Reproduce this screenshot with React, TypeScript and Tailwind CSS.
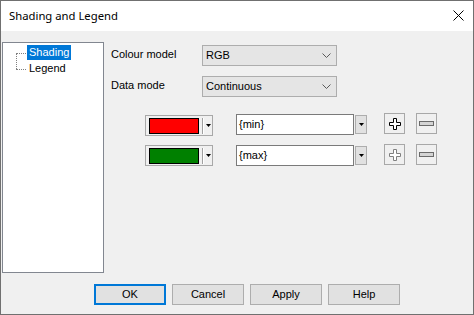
import React from "react";

const body = { fontFamily: '"Liberation Sans", Arial, sans-serif' };

function Chevron() {
  return (
    <svg width="9" height="5" viewBox="0 0 9 5" className="block">
      <path d="M0.5 0.5 L4.5 4.5 L8.5 0.5" fill="none" stroke="#5a5a5a" strokeWidth="1" />
    </svg>
  );
}

function Combo({ text }: { text: string }) {
  return (
    <div className="flex h-[21px] w-[135px] items-center justify-between border border-[#adadad] bg-[#e5e5e5] pl-[3px] pr-[5px] text-[11px] text-black">
      <span>{text}</span>
      <Chevron />
    </div>
  );
}

function Tri() {
  return (
    <svg width="5" height="3" viewBox="0 0 5 3" className="block">
      <path d="M0 0 H5 L2.5 3 Z" fill="#000" />
    </svg>
  );
}

function Picker({ color }: { color: string }) {
  return (
    <div className="flex h-[21px] w-[68px] items-center border border-[#a8a8a8] bg-[#f0f0f0] pl-[3px]">
      <div className="h-[16px] w-[50px] border border-black" style={{ background: color }} />
      <div className="ml-[3px] h-[16px] w-[2px] border-l border-[#a0a0a0] bg-white" />
      <div className="ml-[2px]">
        <Tri />
      </div>
    </div>
  );
}

function Field({ text }: { text: string }) {
  return (
    <div className="flex items-start">
      <div className="flex h-[21px] w-[118px] items-center border border-[#7a7a7a] bg-white pl-[2px] text-[11px] text-black">
        {text}
      </div>
      <div className="ml-[1px] mt-[1px] flex h-[19px] w-[12px] items-center justify-center border border-[#adadad] bg-[#e1e1e1]">
        <Tri />
      </div>
    </div>
  );
}

function Plus({ enabled }: { enabled: boolean }) {
  const c = enabled ? "#000" : "#808080";
  return (
    <div className="flex h-[21px] w-[21px] items-center justify-center border border-[#a8a8a8] bg-[#f0f0f0]">
      <svg width="14" height="14" viewBox="0 0 14 14" className="block">
        <path
          d="M5.5 1.5 H8.5 V5.5 H12.5 V8.5 H8.5 V12.5 H5.5 V8.5 H1.5 V5.5 H5.5 Z"
          fill="#fff"
          stroke={c}
          strokeWidth="1"
        />
      </svg>
    </div>
  );
}

function Minus() {
  return (
    <div className="flex h-[21px] w-[21px] items-center justify-center border border-[#a8a8a8] bg-[#f0f0f0]">
      <svg width="15" height="6" viewBox="0 0 15 6" className="block">
        <rect x="0.5" y="0.5" width="14" height="4" fill="#d4d4d4" stroke="#6a6a6a" strokeWidth="1" />
      </svg>
    </div>
  );
}

function Btn({ label, def }: { label: string; def?: boolean }) {
  return (
    <div
      className={
        "flex h-[21px] w-[72px] items-center justify-center bg-[#e1e1e1] text-[11px] text-black " +
        (def ? "border-2 border-[#0078d7]" : "border border-[#adadad]")
      }
    >
      {label}
    </div>
  );
}

export default function App() {
  return (
    <div className="flex h-[315px] w-[474px] flex-col border border-[#707070] bg-[#f0f0f0]" style={body}>
      {/* title bar */}
      <div className="flex h-[30px] shrink-0 items-center justify-between bg-white pl-[8px] pr-[9px]">
        <span
          className="text-[11.3px] text-black"
          style={{ fontFamily: '"Segoe UI", "Noto Sans", sans-serif' }}
        >
          Shading and Legend
        </span>
        <svg width="11" height="11" viewBox="0 0 11 11" className="mb-[1px] block">
          <path d="M0.5 0.5 L10.5 10.5 M10.5 0.5 L0.5 10.5" stroke="#000" strokeWidth="1" />
        </svg>
      </div>

      {/* main */}
      <div className="flex flex-1 flex-col">
        <div className="flex">
          {/* tree */}
          <div className="ml-[1px] mt-[11px] h-[231px] w-[102px] border border-[#828790] bg-white text-[11px]">
            <div className="relative h-full">
              <div className="absolute left-[13px] top-[10px] h-[16px] border-l border-dotted border-[#808080]" />
              <div className="absolute left-[13px] top-[10px] w-[10px] border-t border-dotted border-[#808080]" />
              <div className="absolute left-[13px] top-[26px] w-[10px] border-t border-dotted border-[#808080]" />
              <div className="flex flex-col pl-[24px] pt-[2px]">
                <div className="flex h-[15px] w-fit items-center bg-[#0078d7] px-[2px] text-white">Shading</div>
                <div className="mt-[1px] flex h-[15px] w-fit items-center px-[2px] text-black">Legend</div>
              </div>
            </div>
          </div>

          {/* right pane */}
          <div className="ml-[7px] flex flex-col pt-[14px] text-[11px] text-black">
            <div className="flex h-[21px] items-start">
              <span className="w-[91px] pt-[1px]">Colour model</span>
              <Combo text="RGB" />
            </div>
            <div className="mt-[10px] flex h-[21px] items-start">
              <span className="w-[91px] pt-[1px]">Data mode</span>
              <Combo text="Continuous" />
            </div>

            <div className="mt-[16px] flex items-start">
              <div className="ml-[34px] mt-[2px]">
                <Picker color="#ff0000" />
              </div>
              <div className="ml-[23px] mt-[1px]">
                <Field text="{min}" />
              </div>
              <div className="ml-[17px]">
                <Plus enabled />
              </div>
              <div className="ml-[11px]">
                <Minus />
              </div>
            </div>
            <div className="mt-[8px] flex items-start">
              <div className="ml-[34px] mt-[1px]">
                <Picker color="#008000" />
              </div>
              <div className="ml-[23px] mt-[1px]">
                <Field text="{max}" />
              </div>
              <div className="ml-[17px]">
                <Plus enabled={false} />
              </div>
              <div className="ml-[11px]">
                <Minus />
              </div>
            </div>
          </div>
        </div>

        {/* buttons */}
        <div className="ml-[93px] mt-[11px] flex gap-[6px]">
          <Btn label="OK" def />
          <Btn label="Cancel" />
          <Btn label="Apply" />
          <Btn label="Help" />
        </div>
      </div>
    </div>
  );
}
